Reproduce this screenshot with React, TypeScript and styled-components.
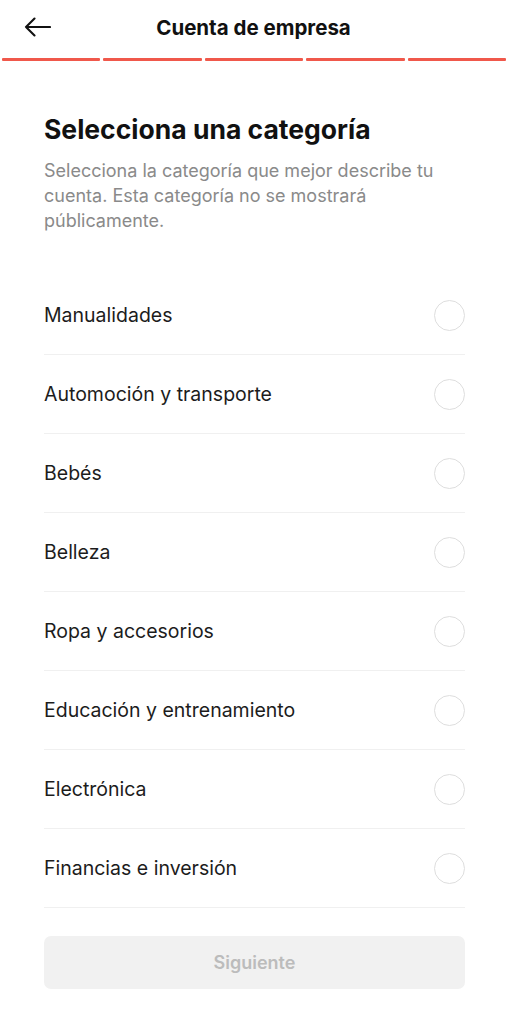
import React from "react";
import styled, { createGlobalStyle } from "styled-components";

const Global = createGlobalStyle`
  html, body { margin: 0; padding: 0; background: #ffffff; }
  body { font-family: Inter, "Noto Sans", "Liberation Sans", sans-serif; -webkit-font-smoothing: antialiased; }
  * { box-sizing: border-box; }
`;

const Page = styled.div`
  width: 507px;
  min-height: 1024px;
  background: #ffffff;
  display: flex;
  flex-direction: column;
`;

const Header = styled.header`
  height: 54px;
  display: grid;
  grid-template-columns: 60px 1fr 60px;
  align-items: center;
`;

const BackButton = styled.button`
  border: none;
  background: none;
  padding: 0 0 0 24px;
  height: 40px;
  display: flex;
  align-items: center;
  cursor: pointer;
`;

const Title = styled.h1`
  margin: 0;
  text-align: center;
  font-size: 20.5px;
  font-weight: 700;
  color: #111111;
`;

const Progress = styled.div`
  display: flex;
  gap: 3px;
  padding: 0 1px 0 2px;
  margin-top: 4px;
`;

const Segment = styled.div<{ $active: boolean }>`
  flex: 1;
  height: 2.5px;
  border-radius: 1px;
  background: ${(p) => (p.$active ? "#f0584b" : "#e8e8e8")};
`;

const Content = styled.main`
  padding: 52px 42px 0 44px;
  display: flex;
  flex-direction: column;
`;

const Heading = styled.h2`
  margin: 0;
  font-size: 26.5px;
  line-height: 32px;
  font-weight: 700;
  color: #111111;
`;

const Subtitle = styled.p`
  margin: 13px 0 0;
  font-size: 18px;
  line-height: 25px;
  color: #8a8a8a;
  padding-right: 20px;
`;

const List = styled.ul`
  list-style: none;
  margin: 43px 0 0;
  padding: 0;
`;

const Row = styled.li`
  height: 79px;
  display: flex;
  align-items: center;
  justify-content: space-between;
  border-bottom: 1px solid #f0f0f0;
  padding-top: 1px;
`;

const Label = styled.span`
  font-size: 19.5px;
  color: #1c1c1c;
`;

const Radio = styled.span`
  width: 31px;
  height: 31px;
  border-radius: 50%;
  border: 1.7px solid #dedede;
  flex-shrink: 0;
`;

const NextButton = styled.button`
  margin-top: 28px;
  height: 53px;
  width: 100%;
  border: none;
  border-radius: 7px;
  background: #f1f1f1;
  color: #bcbcbc;
  font-family: inherit;
  font-size: 18px;
  font-weight: 600;
`;

const categories = [
  "Manualidades",
  "Automoción y transporte",
  "Bebés",
  "Belleza",
  "Ropa y accesorios",
  "Educación y entrenamiento",
  "Electrónica",
  "Financias e inversión",
];

export default function App() {
  return (
    <Page>
      <Global />
      <Header>
        <BackButton aria-label="Atrás">
          <svg width="27" height="20" viewBox="0 0 27 20" fill="none">
            <path d="M26 10H2M10.5 1.5L2 10l8.5 8.5" stroke="#111" strokeWidth="2.1" strokeLinecap="round" strokeLinejoin="round" />
          </svg>
        </BackButton>
        <Title>Cuenta de empresa</Title>
        <div />
      </Header>
      <Progress>
        {[0, 1, 2, 3, 4].map((i) => (
          <Segment key={i} $active />
        ))}
      </Progress>
      <Content>
        <Heading>Selecciona una categoría</Heading>
        <Subtitle>
          Selecciona la categoría que mejor describe tu cuenta. Esta categoría no se mostrará públicamente.
        </Subtitle>
        <List>
          {categories.map((c) => (
            <Row key={c}>
              <Label>{c}</Label>
              <Radio />
            </Row>
          ))}
        </List>
        <NextButton disabled>Siguiente</NextButton>
      </Content>
    </Page>
  );
}
